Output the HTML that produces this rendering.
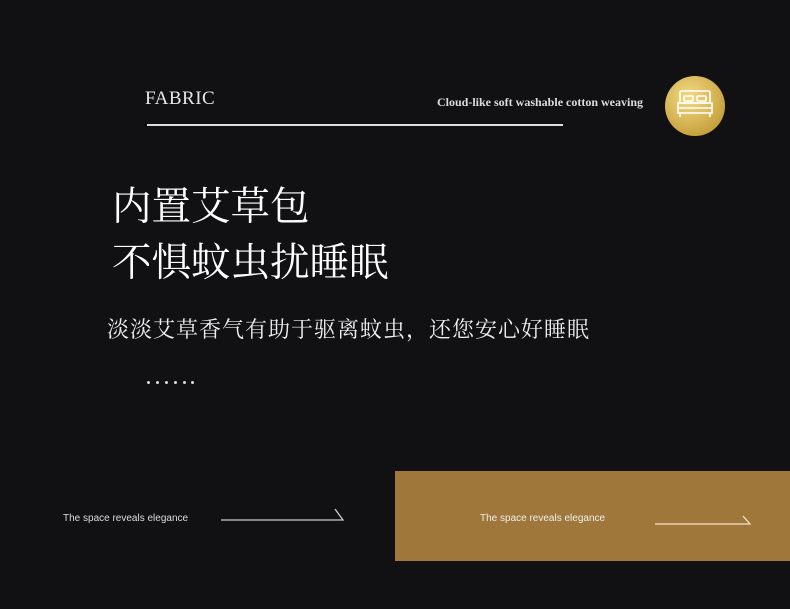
<!DOCTYPE html>
<html><head><meta charset="utf-8"><style>
body{margin:0;width:790px;height:609px;background:#111012;position:relative;overflow:hidden;font-family:"Liberation Sans","Noto Sans CJK SC",sans-serif;color:#fff}
.a{position:absolute;white-space:nowrap}
.d{position:absolute;top:381px;width:3px;height:3px;border-radius:50%;background:#ddd}
</style></head><body>
<div class="a" style="left:145px;top:88px;font:19px 'Liberation Serif',serif;color:#e8e8e8;letter-spacing:0.5px">FABRIC</div>
<div class="a" style="left:147px;top:124px;width:416px;height:2px;background:#ddd"></div>
<div class="a" style="left:437px;top:95px;font:bold 12px 'Liberation Serif',serif;color:#ddd">Cloud-like soft washable cotton weaving</div>
<div class="a" style="left:665px;top:76px;width:60px;height:60px;border-radius:50%;background:radial-gradient(circle at 40% 35%,#f3dc86,#c9a440 70%,#b28f34)"></div>
<svg class="a" style="left:674px;top:88px" width="42" height="36" viewBox="0 0 42 36" fill="none" stroke="#fff" stroke-width="1.6">
<rect x="6" y="3" width="30" height="12" rx="1.5"/><rect x="10" y="8" width="9" height="5" rx="1"/><rect x="23" y="8" width="9" height="5" rx="1"/>
<path d="M4 15 H38 V25 H4 Z M4 20 H38 M6 25 V29 M36 25 V29"/></svg>
<div class="a" style="left:112px;top:176px;font:39.5px 'Noto Serif CJK SC',serif;color:#fff">内置艾草包</div>
<div class="a" style="left:112px;top:232px;font:39.5px 'Noto Serif CJK SC',serif;color:#fff">不惧蚊虫扰睡眠</div>
<div class="a" style="left:107px;top:313px;font:22px 'Noto Serif CJK SC',serif;color:#eee;letter-spacing:1px">淡淡艾草香气有助于驱离蚊虫，还您安心好睡眠</div>
<div class="d" style="left:147px"></div><div class="d" style="left:156px"></div><div class="d" style="left:165px"></div><div class="d" style="left:174px"></div><div class="d" style="left:183px"></div><div class="d" style="left:191px"></div>
<div class="a" style="left:63px;top:513px;font:10px 'Liberation Sans',sans-serif;color:#ddd">The space reveals elegance</div>
<svg class="a" style="left:220px;top:506px" width="126" height="18"><path d="M1 14 H123 L115 3" stroke="#ccc" stroke-width="1.3" fill="none"/></svg>
<div class="a" style="left:395px;top:471px;width:395px;height:90px;background:#a0773a"></div>
<div class="a" style="left:480px;top:513px;font:10px 'Liberation Sans',sans-serif;color:#eee">The space reveals elegance</div>
<svg class="a" style="left:654px;top:513px" width="100" height="14"><path d="M1 11 H96 L89 3" stroke="#f3e6c8" stroke-width="1.3" fill="none"/></svg>
</body></html>
